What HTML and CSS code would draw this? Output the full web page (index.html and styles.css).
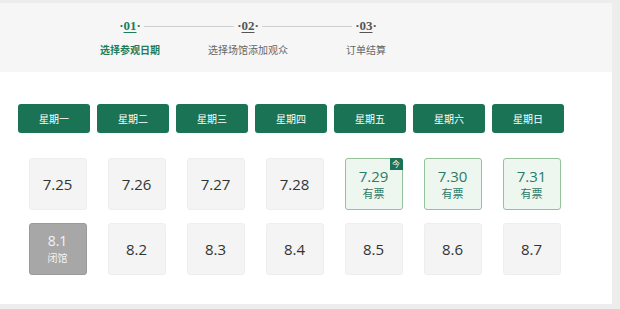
FILE: index.html
```html
<!DOCTYPE html>
<html lang="zh-CN">
<head>
    <meta charset="UTF-8">
    <meta name="viewport" content="width=device-width, initial-scale=1.0">
    <title>选择参观日期</title>
    <link rel="stylesheet" href="styles.css">
</head>
<body>
    <div class="panel">
        <!-- steps header -->
        <div class="steps">
            <div class="step active">
                <div class="step-num"><span class="line hide"></span><span class="num">·<u>01</u>·</span><span class="line"></span></div>
                <div class="step-name">选择参观日期</div>
            </div>
            <div class="step">
                <div class="step-num"><span class="line"></span><span class="num">·<u>02</u>·</span><span class="line"></span></div>
                <div class="step-name">选择场馆添加观众</div>
            </div>
            <div class="step">
                <div class="step-num"><span class="line"></span><span class="num">·<u>03</u>·</span><span class="line hide"></span></div>
                <div class="step-name">订单结算</div>
            </div>
        </div>

        <!-- calendar -->
        <div class="calendar">
            <div class="week">星期一</div>
            <div class="week">星期二</div>
            <div class="week">星期三</div>
            <div class="week">星期四</div>
            <div class="week">星期五</div>
            <div class="week">星期六</div>
            <div class="week">星期日</div>

            <div class="day"><span class="date">7.25</span></div>
            <div class="day"><span class="date">7.26</span></div>
            <div class="day"><span class="date">7.27</span></div>
            <div class="day"><span class="date">7.28</span></div>
            <div class="day open"><span class="today">今</span><span class="date">7.29</span><span class="state">有票</span></div>
            <div class="day open"><span class="date">7.30</span><span class="state">有票</span></div>
            <div class="day open"><span class="date">7.31</span><span class="state">有票</span></div>

            <div class="day closed"><span class="date">8.1</span><span class="state">闭馆</span></div>
            <div class="day"><span class="date">8.2</span></div>
            <div class="day"><span class="date">8.3</span></div>
            <div class="day"><span class="date">8.4</span></div>
            <div class="day"><span class="date">8.5</span></div>
            <div class="day"><span class="date">8.6</span></div>
            <div class="day"><span class="date">8.7</span></div>
        </div>
    </div>
</body>
</html>
```

FILE: styles.css
```css
*{
    margin: 0px;
    padding: 0px;
    box-sizing: border-box;
}

body{
    background-color: #ededed;
    font-family: "Open Sans", "Noto Sans CJK SC", sans-serif;
    overflow: hidden;
}

.panel{
    width: 612px;
    height: 301px;
    margin-top: 3px;
    background-color: #fff;
}

/* steps */
.steps{
    height: 69px;
    background-color: #f6f6f6;
    display: flex;
    padding-left: 71px;
    padding-top: 14px;
}

.step{
    width: 118px;
}

.step-num{
    display: flex;
    align-items: center;
    height: 18px;
}

.step-num .line{
    flex: 1;
    height: 1px;
    background-color: #cfcfcf;
}

.step-num .line.hide{
    background-color: transparent;
}

.step-num .num{
    font-family: "Liberation Serif", serif;
    font-weight: bold;
    font-size: 13px;
    color: #555;
    padding: 0 3px;
}

.step-num .num u{
    text-decoration-thickness: 1px;
    text-underline-offset: 2px;
}

.step-name{
    margin-top: 7px;
    text-align: center;
    font-size: 10px;
    color: #666;
    font-family: "Noto Sans CJK SC", sans-serif;
}

.step.active .num,
.step.active .step-name{
    color: #1e7c5a;
}

.step.active .step-name{
    font-weight: bold;
}

/* calendar */
.calendar{
    display: grid;
    grid-template-columns: repeat(7, 79px);
    row-gap: 13px;
    margin-top: 32px;
    padding-left: 18px;
}

.week{
    width: 72px;
    height: 29px;
    margin-bottom: 12px;
    background-color: #1b7356;
    border-radius: 3px;
    color: #fff;
    font-size: 10px;
    line-height: 29px;
    text-align: center;
    font-family: "Noto Sans CJK SC", sans-serif;
}

.day{
    position: relative;
    justify-self: center;
    width: 58px;
    height: 52px;
    background-color: #f4f4f4;
    border: 1px solid #eeeeee;
    border-radius: 3px;
    display: flex;
    flex-direction: column;
    align-items: center;
    justify-content: center;
    color: #333;
}

.day .date{
    font-size: 15px;
    line-height: 18px;
}

.day .state{
    font-size: 11px;
    line-height: 16px;
    font-family: "Noto Sans CJK SC", sans-serif;
}

.day.open{
    background-color: #eef7ef;
    border-color: #93c29c;
    color: #2b7b6a;
}

.day.closed{
    background-color: #a7a7a7;
    border-color: #9a9a9a;
    color: #f2f2f2;
}

.day.closed .date{
    font-size: 14px;
}

.day.closed .state{
    font-size: 10px;
}

.today{
    position: absolute;
    top: -1px;
    right: -1px;
    width: 13px;
    height: 12px;
    background-color: #1b7356;
    color: #fff;
    font-size: 8px;
    line-height: 12px;
    text-align: center;
    border-radius: 0 3px 0 0;
    font-family: "Noto Sans CJK SC", sans-serif;
}
```
